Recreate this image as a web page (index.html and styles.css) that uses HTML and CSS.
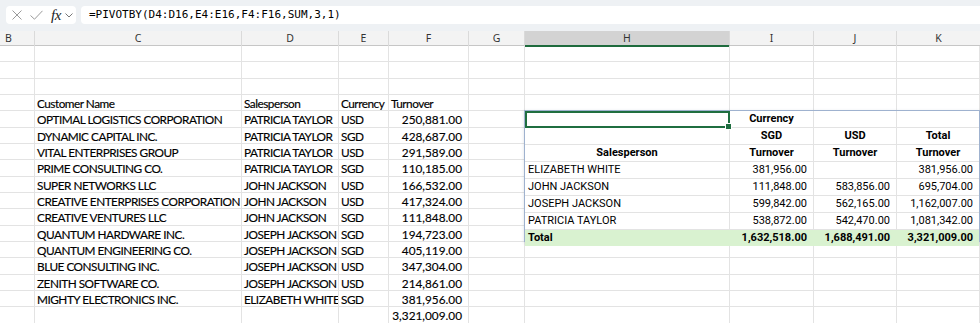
FILE: index.html
```html
<!DOCTYPE html>
<html>
<head>
<meta charset="utf-8">
<link rel="stylesheet" href="styles.css">
</head>
<body>
<div class="app">
  <div class="fbar">
    <div class="nbox">
      <svg class="ic-x" width="10" height="10" viewBox="0 0 10 10"><path d="M0.5 0.5L9.5 9.5M9.5 0.5L0.5 9.5" stroke="#9a9a9a" stroke-width="1" fill="none"/></svg>
      <svg class="ic-ok" width="13" height="10" viewBox="0 0 13 10"><path d="M0.5 5.5L4.5 9.2L12.5 0.8" stroke="#9a9a9a" stroke-width="1" fill="none"/></svg>
      <span class="fx">fx</span>
      <svg class="ic-dd" width="8" height="5" viewBox="0 0 8 5"><path d="M0.5 0.5L4 4L7.5 0.5" stroke="#777" stroke-width="1" fill="none"/></svg>
    </div>
    <div class="formula">=PIVOTBY(D4:D16,E4:E16,F4:F16,SUM,3,1)</div>
  </div>

  <div class="colheads">
    <div class="ch ch-b">B</div>
    <div class="ch">C</div>
    <div class="ch">D</div>
    <div class="ch">E</div>
    <div class="ch">F</div>
    <div class="ch">G</div>
    <div class="ch ch-sel">H</div>
    <div class="ch">I</div>
    <div class="ch">J</div>
    <div class="ch ch-last">K</div>
  </div>

  <div class="sheet">
    <!-- row 1 -->
    <div class="c"></div><div class="c"></div><div class="c"></div><div class="c"></div><div class="c"></div><div class="c"></div><div class="c"></div><div class="c"></div><div class="c"></div><div class="c"></div>
    <!-- row 2 -->
    <div class="c"></div><div class="c"></div><div class="c"></div><div class="c"></div><div class="c"></div><div class="c"></div><div class="c"></div><div class="c"></div><div class="c"></div><div class="c"></div>
    <!-- row 3 -->
    <div class="c"></div><div class="c"></div><div class="c"></div><div class="c"></div><div class="c"></div><div class="c"></div><div class="c"></div><div class="c"></div><div class="c"></div><div class="c"></div>
    <!-- row 4 -->
    <div class="c"></div><div class="c">Customer Name</div><div class="c">Salesperson</div><div class="c">Currency</div><div class="c">Turnover</div><div class="c"></div><div class="c"></div><div class="c"></div><div class="c"></div><div class="c"></div>
    <!-- row 5 -->
    <div class="c"></div><div class="c">OPTIMAL LOGISTICS CORPORATION</div><div class="c">PATRICIA TAYLOR</div><div class="c">USD</div><div class="c num">250,881.00</div><div class="c"></div>
    <div class="pivot">
      <div class="p sel"></div><div class="p ctr b">Currency</div><div class="p"></div><div class="p"></div>
      <div class="p"></div><div class="p ctr b">SGD</div><div class="p ctr b">USD</div><div class="p ctr b">Total</div>
      <div class="p ctr b">Salesperson</div><div class="p ctr b">Turnover</div><div class="p ctr b">Turnover</div><div class="p ctr b">Turnover</div>
      <div class="p">ELIZABETH WHITE</div><div class="p num">381,956.00</div><div class="p num"></div><div class="p num">381,956.00</div>
      <div class="p">JOHN JACKSON</div><div class="p num">111,848.00</div><div class="p num">583,856.00</div><div class="p num">695,704.00</div>
      <div class="p">JOSEPH JACKSON</div><div class="p num">599,842.00</div><div class="p num">562,165.00</div><div class="p num">1,162,007.00</div>
      <div class="p">PATRICIA TAYLOR</div><div class="p num">538,872.00</div><div class="p num">542,470.00</div><div class="p num">1,081,342.00</div>
      <div class="p tot b">Total</div><div class="p tot b num">1,632,518.00</div><div class="p tot b num">1,688,491.00</div><div class="p tot b num">3,321,009.00</div>
    </div>
    <!-- row 6 -->
    <div class="c"></div><div class="c">DYNAMIC CAPITAL INC.</div><div class="c">PATRICIA TAYLOR</div><div class="c">SGD</div><div class="c num">428,687.00</div><div class="c"></div>
    <!-- row 7 -->
    <div class="c"></div><div class="c">VITAL ENTERPRISES GROUP</div><div class="c">PATRICIA TAYLOR</div><div class="c">USD</div><div class="c num">291,589.00</div><div class="c"></div>
    <!-- row 8 -->
    <div class="c"></div><div class="c">PRIME CONSULTING CO.</div><div class="c">PATRICIA TAYLOR</div><div class="c">SGD</div><div class="c num">110,185.00</div><div class="c"></div>
    <!-- row 9 -->
    <div class="c"></div><div class="c">SUPER NETWORKS LLC</div><div class="c">JOHN JACKSON</div><div class="c">USD</div><div class="c num">166,532.00</div><div class="c"></div>
    <!-- row 10 -->
    <div class="c"></div><div class="c">CREATIVE ENTERPRISES CORPORATION</div><div class="c">JOHN JACKSON</div><div class="c">USD</div><div class="c num">417,324.00</div><div class="c"></div>
    <!-- row 11 -->
    <div class="c"></div><div class="c">CREATIVE VENTURES LLC</div><div class="c">JOHN JACKSON</div><div class="c">SGD</div><div class="c num">111,848.00</div><div class="c"></div>
    <!-- row 12 -->
    <div class="c"></div><div class="c">QUANTUM HARDWARE INC.</div><div class="c">JOSEPH JACKSON</div><div class="c">SGD</div><div class="c num">194,723.00</div><div class="c"></div>
    <!-- row 13 -->
    <div class="c"></div><div class="c">QUANTUM ENGINEERING CO.</div><div class="c">JOSEPH JACKSON</div><div class="c">SGD</div><div class="c num">405,119.00</div><div class="c"></div><div class="c"></div><div class="c"></div><div class="c"></div><div class="c"></div>
    <!-- row 14 -->
    <div class="c"></div><div class="c">BLUE CONSULTING INC.</div><div class="c">JOSEPH JACKSON</div><div class="c">USD</div><div class="c num">347,304.00</div><div class="c"></div><div class="c"></div><div class="c"></div><div class="c"></div><div class="c"></div>
    <!-- row 15 -->
    <div class="c"></div><div class="c">ZENITH SOFTWARE CO.</div><div class="c">JOSEPH JACKSON</div><div class="c">USD</div><div class="c num">214,861.00</div><div class="c"></div><div class="c"></div><div class="c"></div><div class="c"></div><div class="c"></div>
    <!-- row 16 -->
    <div class="c"></div><div class="c">MIGHTY ELECTRONICS INC.</div><div class="c">ELIZABETH WHITE</div><div class="c">SGD</div><div class="c num">381,956.00</div><div class="c"></div><div class="c"></div><div class="c"></div><div class="c"></div><div class="c"></div>
    <!-- row 17 -->
    <div class="c"></div><div class="c"></div><div class="c"></div><div class="c"></div><div class="c num">3,321,009.00</div><div class="c"></div><div class="c"></div><div class="c"></div><div class="c"></div><div class="c"></div>
  </div>
</div>
</body>
</html>
```

FILE: styles.css
```css
* { box-sizing: border-box; }
html, body { margin: 0; padding: 0; background: #fff; }
body { width: 980px; height: 323px; overflow: hidden; }

.app { width: 980px; }

/* formula bar */
.fbar {
  height: 31px;
  background: #eef1f4;
  display: flex;
  padding: 6px 0 7px 6px;
  gap: 5px;
}
.nbox {
  width: 70px;
  height: 18px;
  background: #fff;
  border-radius: 4px;
  display: flex;
  align-items: center;
  padding-left: 6px;
}
.ic-ok { margin-left: 8px; }
.fx {
  margin-left: 8px;
  font-family: "Liberation Serif", serif;
  font-style: italic;
  font-size: 15px;
  line-height: 14px;
  color: #222;
  letter-spacing: -0.5px;
}
.ic-dd { margin-left: 4px; margin-top: 1px; }
.formula {
  flex: 1;
  height: 18px;
  background: #fff;
  border-radius: 4px 0 0 4px;
  padding-left: 8px;
  font-family: "DejaVu Sans Mono", monospace;
  font-size: 11px;
  line-height: 18px;
  color: #000;
}

/* column headers */
.colheads {
  display: grid;
  grid-template-columns: 35px 207px 97px 50px 80px 56px 205px 84px 83px 83px;
  height: 15px;
  background: #f3f3f3;
  border-bottom: 1px solid #c6c6c6;
}
.ch {
  border-right: 1px solid #dadada;
  font-family: "Noto Sans", sans-serif;
  font-size: 10.5px;
  line-height: 14px;
  text-align: center;
  color: #333;
}
.ch-b { text-align: left; padding-left: 5px; }
.ch-last { border-right: none; }
.ch-sel {
  background: #d3d3d3;
  border-bottom: 2px solid #1e6b3d;
  margin-bottom: -1px;
}

/* sheet */
.sheet {
  display: grid;
  grid-template-columns: 35px 207px 97px 50px 80px 56px 205px 84px 83px 83px;
  grid-template-rows: repeat(17, 16.33px);
}
.c {
  border-right: 1px solid #e3e3e3;
  border-bottom: 1px solid #e3e3e3;
  font-family: Lato, sans-serif;
  font-size: 11.8px;
  letter-spacing: -0.5px;
  -webkit-text-stroke: 0.15px #000;
  line-height: 16px;
  padding: 1px 2px 0;
  white-space: nowrap;
  overflow: hidden;
  color: #000;
}
.c.num { text-align: right; padding-right: 6px; letter-spacing: 0; }

/* pivot output */
.pivot {
  grid-column: 7 / span 4;
  grid-row: span 8;
  margin: -1px 0 0 -1px;
  border: 1px solid #9fb2cf;
  box-shadow: 0 1px 3px rgba(60, 80, 110, 0.18);
  display: grid;
  grid-template-columns: 205px 84px 83px 82px;
  grid-template-rows: repeat(8, 1fr);
  position: relative;
  background: #fff;
}
.p {
  border-right: 1px solid #e3e3e3;
  border-bottom: 1px solid #e3e3e3;
  font-family: Roboto, "Liberation Sans", sans-serif;
  font-size: 11px;
  line-height: 16px;
  padding: 0 3px;
  white-space: nowrap;
  color: #000;
}
.p:nth-child(4n) { border-right: none; }
.p.num { text-align: right; padding-right: 6px; }
.p.ctr { text-align: center; }
.p.b { font-weight: 700; }
.p.tot { background: #d9f2d0; border-bottom: none; border-right-color: #d9f2d0; }
.p.sel {
  position: relative;
  border: 1px solid #1f6e40;
  outline: 1px solid #1f6e40;
  outline-offset: -2px;
}
.p.sel::after {
  content: "";
  position: absolute;
  right: -3px;
  bottom: -3px;
  width: 5px;
  height: 5px;
  background: #1f6e40;
  border: 1px solid #fff;
}
```
